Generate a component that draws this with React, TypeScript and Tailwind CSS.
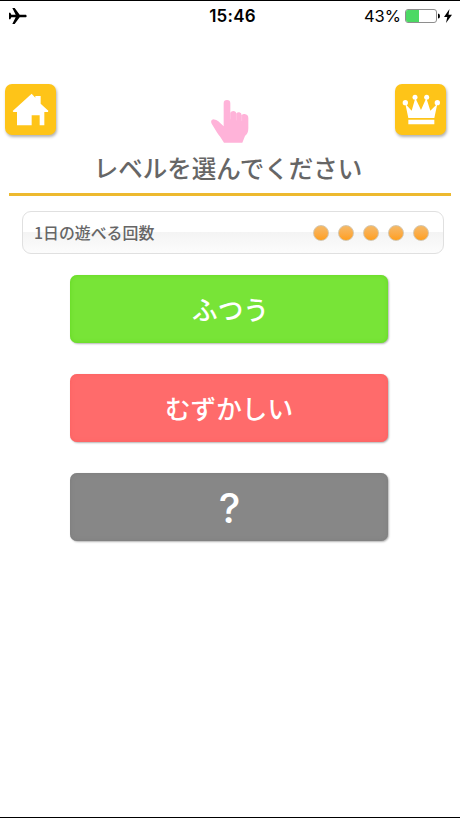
const levels = [
  { label: 'ふつう', style: 'bg-[#78e437] pb-px pl-[3px] text-[25.6px] shadow-[inset_0_0_4px_#62d820,1px_1px_2px_rgba(0,0,0,0.3)]' },
  { label: 'むずかしい', style: 'bg-[#ff6b6b] pb-px text-[25.6px] shadow-[inset_0_0_4px_#fb5f5f,1px_1px_2px_rgba(0,0,0,0.3)]' },
  { label: '?', style: "bg-[#878787] pt-0.5 pl-px text-[41px] font-['Inter',sans-serif] shadow-[inset_0_0_4px_#7c7c7c,1px_1px_2px_rgba(0,0,0,0.3)]" },
]

function StatusBar() {
  return (
    <div className="grid grid-cols-3 items-center h-[30px] pl-[9px] pr-[8px] font-['Inter','Liberation_Sans',sans-serif] text-black">
      <svg className="mb-px" width="18" height="16" viewBox="0 0 54 48" fill="#000">
        <path d="M0 14h4l3 6h13L10 0h7l15 20h19q4 4 0 8H32L17 48h-7l10-20H7l-3 6H0z" />
      </svg>
      <span className="text-center text-[17px] font-semibold tracking-[0.2px] pl-[4px] pt-px">15:46</span>
      <div className="flex items-center justify-end">
        <span className="text-[16.5px] mr-[4px]">43%</span>
        <svg width="35" height="16" viewBox="0 0 35 16">
          <rect x="0.5" y="1.5" width="31" height="13" rx="2.5" fill="#fff" stroke="#8e8e8e" />
          <path d="M3 2h11v12H3q-2 0-2-2V4q0-2 2-2z" fill="#4cd964" />
          <path d="M33 5.500q2 0 2 2.500t-2 2.500z" fill="#000" />
        </svg>
        <svg className="ml-[4px]" width="8" height="14" viewBox="0 0 8 14" fill="#000">
          <path d="M5.500 0 0 8h3.300L2 14l6-8.300H4.500z" />
        </svg>
      </div>
    </div>
  )
}

function HomeIcon() {
  return (
    <svg width="51" height="51" viewBox="0 0 153 153" fill="#fff">
      <path d="M80 29 23 81l2 3h11v40h44V94h24v30h14V84h11l1-4-23-21V36H91v5z" />
    </svg>
  )
}

function CrownIcon() {
  return (
    <svg width="51" height="51" viewBox="0 0 153 153" fill="#fff">
      <circle cx="31" cy="56" r="8" />
      <circle cx="60" cy="40" r="7.500" />
      <circle cx="95" cy="40" r="7.500" />
      <circle cx="127" cy="56" r="8" />
      <path d="m31 59 9 43h78l9-43-21 21-12-38-16 36-17-36-11 38zM40 107h78v14H40z" />
    </svg>
  )
}

function HandIcon() {
  return (
    <svg width="38" height="43" viewBox="0 0 114 129" fill="#ffb3d9">
      <path d="M38 10Q38 0 48 0t10 10v29q2-6 9-6 8 0 9 8 3-5 9-4 7 1 7 9 3-5 9-4 11 2 11 12v31q0 16-10 23l-8 20H39L28 111Q23 105 19 99L2 71Q-3 59 7 58q10 1 15 6l16 15z" />
      <path d="M58 39v19M76 41v20M92 46v17" stroke="#ffc9e4" strokeWidth="2" />
    </svg>
  )
}

function App() {
  return (
    <div className="flex flex-col h-[818px] w-[460px] bg-white border-y border-black font-['Noto_Sans_CJK_JP',sans-serif]">
      <StatusBar />

      <header className="flex justify-between items-start mt-[53px] pl-[5px] pr-[14px]">
        <button className="size-[51px] rounded-[7px] bg-[#fec418] shadow-[1px_2px_3px_rgba(0,0,0,0.3)]">
          <HomeIcon />
        </button>
        <div className="mt-[16px] ml-[8px]">
          <HandIcon />
        </div>
        <button className="size-[51px] rounded-[7px] bg-[#fec418] shadow-[1px_2px_3px_rgba(0,0,0,0.3)]">
          <CrownIcon />
        </button>
      </header>

      <h1 className="mx-[9px] h-[53px] pt-[9px] pr-[4px] border-b-[3px] border-[#edb92e] text-center text-[24.5px] leading-[32px] font-medium text-[#666]">
        レベルを選んでください
      </h1>

      <section className="flex items-center justify-between ml-[22px] mr-[16px] mt-[15px] h-[43px] pl-[11px] pr-[14px] rounded-[9px] border border-[#e0e0e0] bg-linear-to-b from-white from-50% via-[#f4f4f4] via-50% to-[#fcfcfc]">
        <span className="text-[15.9px] font-medium text-[#666]">1日の遊べる回数</span>
        <div className="flex gap-[9px]">
          {[1, 2, 3, 4, 5].map((n) => (
            <span
              key={n}
              className="size-4 rounded-full border border-[#d5c6ad] bg-linear-to-b from-[#f5b966] to-[#ff9f18]"
            />
          ))}
        </div>
      </section>

      <main className="flex flex-col gap-[31px] mt-[21px] ml-[70px] w-[318px]">
        {levels.map((level) => (
          <button
            key={level.label}
            className={`flex items-center justify-center h-[68px] rounded-[7px] leading-none font-medium text-white ${level.style}`}
          >
            {level.label}
          </button>
        ))}
      </main>
    </div>
  )
}

export default App
